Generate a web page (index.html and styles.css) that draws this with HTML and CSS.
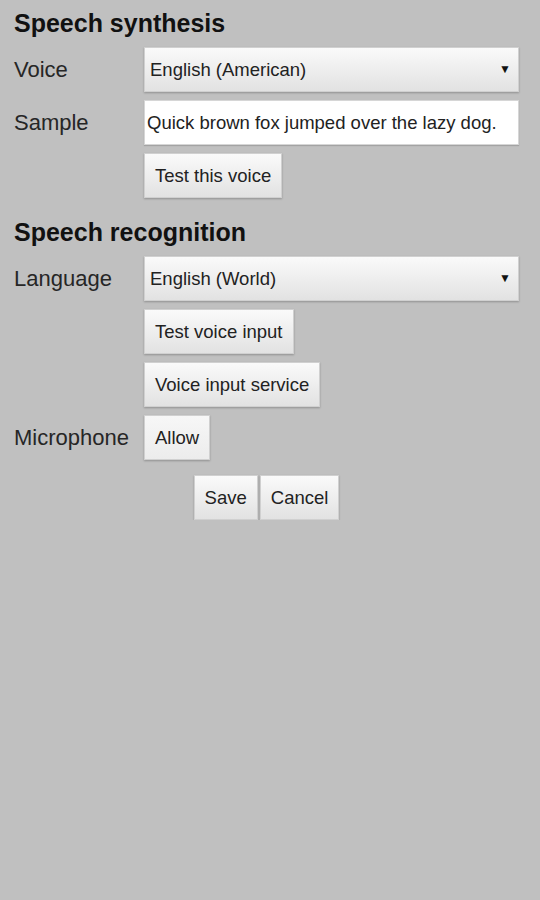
FILE: index.html
```html
<!DOCTYPE html>
<html lang="en">
  <head>
    <meta charset="UTF-8" />
    <title>Speech settings</title>
    <link rel="stylesheet" href="styles.css">
  </head>
  <body>
    <form class="settings" id="speechForm">
      <h2>Speech synthesis</h2>
      <div class="form-grid">
        <label for="voice">Voice</label>
        <div class="select-wrap">
          <select id="voice" name="voice">
            <option>English (American)</option>
            <option>English (British)</option>
          </select>
        </div>

        <label for="sample">Sample</label>
        <input type="text" id="sample" name="sample" value="Quick brown fox jumped over the lazy dog." />

        <span></span>
        <button type="button">Test this voice</button>
      </div>

      <h2 class="section">Speech recognition</h2>
      <div class="form-grid">
        <label for="language">Language</label>
        <div class="select-wrap">
          <select id="language" name="language">
            <option>English (World)</option>
            <option>English (US)</option>
          </select>
        </div>

        <span></span>
        <button type="button">Test voice input</button>

        <span></span>
        <button type="button">Voice input service</button>

        <label>Microphone</label>
        <button type="button" class="flat">Allow</button>
      </div>

      <div class="actions">
        <button type="submit">Save</button>
        <button type="reset">Cancel</button>
      </div>
    </form>
  </body>
</html>
```

FILE: styles.css
```css
body {
  margin: 0;
  padding-top: 8px;
  font-family: "Liberation Sans", Arial, sans-serif;
  background-color: #c0c0c0;
  color: #222;
}

.settings {
  padding: 0 21px 0 14px;
}

h2 {
  margin: 0 0 9px;
  font-size: 25px;
  line-height: 30px;
  font-weight: bold;
  color: #111;
}

h2.section {
  margin-top: 19px;
}

.form-grid {
  display: grid;
  grid-template-columns: 130px 1fr;
  row-gap: 8px;
  align-items: center;
}

label {
  font-size: 22px;
  color: #262626;
}

input[type="text"],
select,
button {
  box-sizing: border-box;
  height: 45px;
  font-family: "Liberation Sans", Arial, sans-serif;
  font-size: 18.5px;
  color: #222;
}

input[type="text"] {
  width: 100%;
  padding: 0 2px;
  background: #fff;
  border: 1px solid #d6d6d6;
  box-shadow: 0 1px 1px rgba(0, 0, 0, 0.15);
}

.select-wrap {
  position: relative;
}

.select-wrap::after {
  content: "\25BC";
  position: absolute;
  right: 8px;
  top: 15px;
  font-size: 12px;
  color: #111;
  pointer-events: none;
}

select {
  width: 100%;
  padding: 0 24px 0 5px;
  appearance: none;
  -webkit-appearance: none;
  border: 1px solid #d0d0d0;
  border-radius: 0;
  background: linear-gradient(#fafafa, #e2e2e2);
  box-shadow: 0 1px 2px rgba(0, 0, 0, 0.25);
}

button {
  justify-self: start;
  padding: 0 10px;
  border: 1px solid #d0d0d0;
  border-radius: 0;
  background: linear-gradient(#fafafa, #e2e2e2);
  box-shadow: 0 1px 2px rgba(0, 0, 0, 0.25);
  cursor: pointer;
}

button.flat {
  background: linear-gradient(#f7f7f7, #ececec);
}

.actions {
  display: flex;
  justify-content: center;
  gap: 2px;
  margin-top: 15px;
}
```
